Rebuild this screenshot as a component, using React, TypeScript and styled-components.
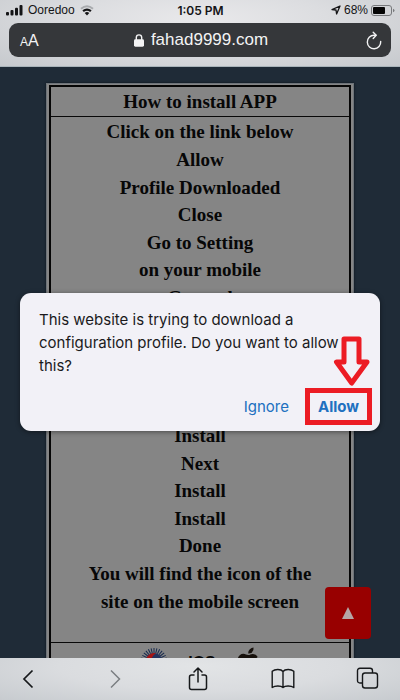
import React from "react";
import styled, { createGlobalStyle } from "styled-components";

const GlobalStyle = createGlobalStyle`
  * { box-sizing: border-box; }
  body { margin: 0; font-family: "Liberation Sans", Arial, sans-serif; }
  button { font: inherit; padding: 0; border: 0; background: none; color: inherit; cursor: pointer; }
`;

const Phone = styled.div`
  display: flex;
  flex-direction: column;
  height: 100vh;
  overflow: hidden;
`;

const Header = styled.header`
  display: flex;
  flex-direction: column;
  gap: 3px;
  padding-bottom: 9px;
  border-bottom: 1px solid #a9b4ba;
  background: radial-gradient(ellipse at 50% 30%, #e9e9eb 0%, #dcdde0 45%, #c6c9cd 100%);
`;

const StatusBar = styled.div`
  display: grid;
  grid-template-columns: 1fr auto 1fr;
  align-items: center;
  height: 20px;
  padding: 0 5px 0 6px;
  font-size: 12px;
  color: #141416;
`;

const StatusGroup = styled.div<{ $end?: boolean }>`
  display: flex;
  align-items: center;
  gap: ${(p) => (p.$end ? 3 : 5)}px;
  justify-content: ${(p) => (p.$end ? "flex-end" : "flex-start")};
`;

const Clock = styled.time`
  font-family: Inter, sans-serif;
  font-weight: 600;
`;

const AddressBar = styled.div`
  display: grid;
  grid-template-columns: 1fr auto 1fr;
  align-items: center;
  height: 34px;
  margin: 0 9px;
  padding: 0 9px 0 11px;
  border-radius: 9px;
  background: #35373a;
  color: #f3f3f4;
`;

const TextSizeButton = styled.button`
  justify-self: start;
  padding-top: 2px;
  font-size: 16px;
  line-height: 20px;
`;

const SmallLetter = styled.span`
  font-size: 12px;
`;

const Address = styled.div`
  display: flex;
  align-items: center;
  gap: 7px;
  font-size: 17px;
`;

const ReloadButton = styled.button`
  display: flex;
  justify-self: end;
`;

const Page = styled.main`
  position: relative;
  flex: 1;
  min-height: 0;
  overflow: hidden;
  padding: 16px 46px 0;
  background: #1f2b37;
`;

const Card = styled.section`
  padding: 1px 2px 2px;
  border: 1px solid #6d7379;
  background: #858585;
  box-shadow: 0 0 2px #0c1218;
  color: #070707;
  font-family: "Liberation Serif", serif;
  font-weight: 700;
  font-size: 19px;
  text-align: center;
`;

const Frame = styled.div`
  border: 2px solid #050505;
  border-bottom: 0;
`;

const Title = styled.h1`
  margin: 0;
  font-size: 19px;
  line-height: 29px;
  border-bottom: 1px solid #080808;
`;

const Steps = styled.ol`
  display: grid;
  grid-auto-rows: 1fr;
  min-height: 498px;
  margin: 0 0 27px;
  padding: 1px 0 0;
  list-style: none;
`;

const Step = styled.li<{ $row?: number }>`
  display: flex;
  align-items: center;
  justify-content: center;
  white-space: nowrap;
  line-height: 27px;
  grid-row: ${(p) => p.$row ?? "auto"};
`;

const Footer = styled.footer`
  display: flex;
  align-items: flex-start;
  justify-content: center;
  gap: 20px;
  padding: 4px 0 10px;
  border-top: 1px solid #080808;
`;

const Brand = styled.span`
  padding-top: 6px;
  font-family: "Liberation Sans", sans-serif;
  font-size: 16px;
  line-height: 20px;
`;

const TopButton = styled.button`
  position: absolute;
  right: 29px;
  bottom: 19px;
  display: grid;
  place-items: center;
  width: 46px;
  height: 52px;
  border-radius: 4px;
  background: #980000;
`;

const Dialog = styled.div`
  position: absolute;
  top: 226px;
  left: 20px;
  right: 20px;
  padding: 15px 8px 6px 19px;
  border-radius: 11px;
  background: #f2f1f7;
  box-shadow: 0 1px 5px rgba(0, 0, 0, 0.45);
  color: #1a1a1c;
  font-family: Inter, sans-serif;
  font-size: 15px;
`;

const Message = styled.p`
  margin: 0;
  padding-right: 20px;
  line-height: 23px;
`;

const Actions = styled.div`
  display: flex;
  justify-content: flex-end;
  align-items: center;
  gap: 16px;
  padding-top: 11px;
  color: #2070c0;
`;

const AllowButton = styled.button`
  width: 67px;
  height: 37px;
  border: 5px solid #ec1c24;
  font-weight: 700;
  white-space: nowrap;
`;

const Arrow = styled.svg`
  position: absolute;
  right: 9px;
  top: 42px;
`;

const Toolbar = styled.nav`
  display: flex;
  justify-content: space-between;
  align-items: center;
  height: 42px;
  padding: 0 20px 0 16px;
  background: radial-gradient(ellipse at 50% 20%, #e2e4e6 0%, #dadcdf 50%, #c7cbcf 100%);
`;

const ToolButton = styled.button`
  display: flex;
  color: #16181a;
  &:disabled { color: #7c7f82; cursor: default; }
`;

const rays = Array.from({ length: 28 }, (_, i) => (i * 360) / 28);

const firstSteps = ["Click on the link below", "Allow", "Profile Downloaded", "Close", "Go to Setting", "on your mobile", "General"];
const lastSteps = ["Install", "Next", "Install", "Install", "Done", "You will find the icon of the", "site on the mobile screen"];

export default function App() {
  return (
    <Phone>
      <GlobalStyle />
      <Header>
        <StatusBar>
          <StatusGroup>
            <svg width="17" height="11" viewBox="0 0 17 11" fill="currentColor" aria-hidden="true">
              <rect x="0" y="7" width="3" height="3.5" rx="1" />
              <rect x="4.5" y="5" width="3" height="5.5" rx="1" />
              <rect x="9" y="2.7" width="3" height="7.8" rx="1" />
              <rect x="13.5" y="0" width="3" height="10.5" rx="1" />
            </svg>
            <span>Ooredoo</span>
            <svg width="14" height="11" viewBox="0 0 14 11" fill="none" aria-hidden="true">
              <path d="M1 3.8Q7-1.4 13 3.8" stroke="#a9abae" strokeWidth="2" />
              <path d="M3.1 6.2Q7 2.9 10.9 6.2" stroke="#141416" strokeWidth="2.2" />
              <path d="M4.7 8Q7 6.2 9.3 8L7 10.5Z" fill="#141416" />
            </svg>
          </StatusGroup>
          <Clock>1:05 PM</Clock>
          <StatusGroup $end>
            <svg width="10" height="10" viewBox="0 0 10 10" fill="none" stroke="currentColor" strokeWidth="1.3" strokeLinejoin="round" aria-hidden="true">
              <path d="M9 1L5.6 9L5 5L1 4.6Z" />
            </svg>
            <span>68%</span>
            <svg width="24" height="11" viewBox="0 0 24 11" aria-hidden="true">
              <rect x=".5" y=".5" width="20" height="10" rx="2.5" fill="none" stroke="#77797c" />
              <rect x="2" y="2" width="12" height="7" rx="1" fill="#050505" />
              <path d="M22 3.7Q23.5 4.2 23.5 5.5T22 7.3Z" fill="#77797c" />
            </svg>
          </StatusGroup>
        </StatusBar>
        <AddressBar>
          <TextSizeButton aria-label="Text size"><SmallLetter>A</SmallLetter>A</TextSizeButton>
          <Address>
            <svg width="10" height="13" viewBox="0 0 10 13" aria-hidden="true">
              <rect x="0" y="5.3" width="10" height="7.4" rx="1.4" fill="#f3f3f4" />
              <path d="M2.3 6V3.6a2.7 2.7 0 0 1 5.4 0V6" fill="none" stroke="#f3f3f4" strokeWidth="1.4" />
            </svg>
            <span>fahad9999.com</span>
          </Address>
          <ReloadButton aria-label="Reload">
            <svg width="16" height="19" viewBox="0 0 16 19" fill="none" stroke="currentColor" strokeWidth="1.4" strokeLinecap="round" strokeLinejoin="round">
              <path d="M14.7 10.5A6.7 6.7 0 1 1 8 4.3H9.8" />
              <path d="M7.2 1.2L10.2 4.3L7.2 7.4" />
            </svg>
          </ReloadButton>
        </AddressBar>
      </Header>

      <Page>
        <Card>
          <Frame>
            <Title>How to install APP</Title>
            <Steps>
              {firstSteps.map((s) => <Step key={s}>{s}</Step>)}
              {lastSteps.map((s, i) => <Step key={i} $row={12 + i}>{s}</Step>)}
            </Steps>
            <Footer>
              <svg width="28" height="28" viewBox="0 0 28 28" aria-hidden="true">
                {rays.map((a) => (
                  <path key={a} d="M14 1V6" stroke="#17294d" strokeWidth="1" transform={`rotate(${a} 14 14)`} />
                ))}
                <circle cx="14" cy="14" r="8" fill="#22335e" />
                <path d="M6 14a8 8 0 0 1 10-7.7Q11 9 11 15T6 14" fill="#a51414" />
              </svg>
              <Brand>IOS</Brand>
              <svg width="24" height="28" viewBox="0 0 24 28" fill="#17110c" aria-hidden="true">
                <path d="M17.5.5Q18 3.5 16 5.2T12.2 6.5Q12 4 13.8 2.3T17.5.5Z" />
                <path d="M12.4 8C10.5 8 9.5 6.7 7.3 6.7C4 6.7 1.5 9.6 1.5 14C1.5 20 5.5 26 8.5 26C10 26 10.8 25 12.6 25S15 26 16.7 26C19 26 21.2 22.6 22.3 19.8C18.2 18 17.8 12.4 21.7 10.1C20.4 8 18.4 6.9 16.5 6.9C14.7 6.9 13.7 8 12.4 8Z" />
              </svg>
            </Footer>
          </Frame>
        </Card>

        <TopButton aria-label="Back to top">
          <svg width="12" height="12" viewBox="0 0 12 12" fill="#b5a5a5"><path d="M6 0L12 12H0Z" /></svg>
        </TopButton>

        <Dialog role="dialog" aria-labelledby="message">
          <Message id="message">
            This website is trying to download a configuration profile. Do you want to allow this?
          </Message>
          <Actions>
            <button>Ignore</button>
            <AllowButton>Allow</AllowButton>
          </Actions>
          <Arrow width="38" height="52" viewBox="0 0 38 52" fill="#f2f1f7" stroke="#ec1c24" strokeWidth="5" strokeLinejoin="round" aria-hidden="true">
            <path d="M11 4H26V27H34L18.7 48L3.5 27H11Z" />
          </Arrow>
        </Dialog>
      </Page>

      <Toolbar aria-label="Browser">
        <ToolButton aria-label="Back">
          <svg width="24" height="24" viewBox="0 0 24 24" fill="none" stroke="currentColor" strokeWidth="1.7"><path d="M16.5 3.5L8 12L16.5 20.5" /></svg>
        </ToolButton>
        <ToolButton aria-label="Forward" disabled>
          <svg width="24" height="24" viewBox="0 0 24 24" fill="none" stroke="currentColor" strokeWidth="1.5"><path d="M10 3.5L18.5 12L10 20.5" /></svg>
        </ToolButton>
        <ToolButton aria-label="Share">
          <svg width="24" height="26" viewBox="0 0 24 26" fill="none" stroke="currentColor" strokeWidth="1.5" strokeLinecap="round" strokeLinejoin="round">
            <path d="M8 9H5.5Q3.5 9 3.5 11V21.5Q3.5 23.5 5.5 23.5H18.5Q20.5 23.5 20.5 21.5V11Q20.5 9 18.5 9H16" />
            <path d="M12 16V2M8 6L12 2L16 6" />
          </svg>
        </ToolButton>
        <ToolButton aria-label="Bookmarks">
          <svg width="24" height="24" viewBox="0 0 24 24" fill="none" stroke="currentColor" strokeWidth="1.4" strokeLinejoin="round">
            <path d="M12 4.5C10 1.8 4 1.8 1.2 4.3V20.5C4 18.4 10 18.4 12 20.5C14 18.4 20 18.4 22.8 20.5V4.3C20 1.8 14 1.8 12 4.5ZM12 4.5V20.5" />
          </svg>
        </ToolButton>
        <ToolButton aria-label="Tabs">
          <svg width="24" height="24" viewBox="0 0 24 24" fill="none" stroke="currentColor" strokeWidth="1.4">
            <path d="M6.5 16H4Q1.5 16 1.5 13.5V3.8Q1.5 1.3 4 1.3H14Q16.5 1.3 16.5 3.8V6" />
            <rect x="6.5" y="6" width="15" height="15" rx="2.5" />
          </svg>
        </ToolButton>
      </Toolbar>
    </Phone>
  );
}
